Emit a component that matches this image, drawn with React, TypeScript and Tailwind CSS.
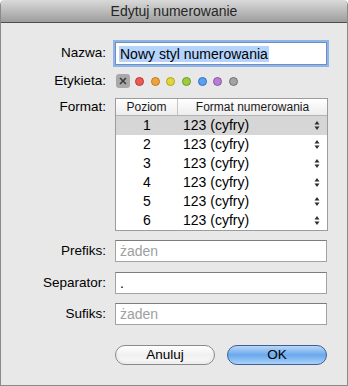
const dots = ["#ec5a52", "#f2a23c", "#e4d43c", "#9ccb3e", "#5c9ef0", "#b67ed4", "#a4a4a4"];
const strokes = ["#b53a33", "#bd7a22", "#b0a024", "#6f9a26", "#356fc0", "#8a57a6", "#707070"];
const levels = [1, 2, 3, 4, 5, 6];

const Stepper = () => (
  <svg width="6" height="11" viewBox="0 0 6 11" className="shrink-0">
    <path d="M3 1 L5.5 4.5 L0.5 4.5 Z" fill="#2e2e2e" />
    <path d="M3 10 L5.5 6.5 L0.5 6.5 Z" fill="#2e2e2e" />
  </svg>
);

const Field = ({ label, value, placeholder, mt }: { label: string; value?: string; placeholder?: string; mt: string }) => (
  <div className={`flex items-center ${mt}`}>
    <div className="w-[105px] text-right text-[13.5px] text-black">{label}</div>
    <div className="ml-[9px] w-[212px] h-[22px] bg-white border border-[#a3a3a3] border-t-[#7c7c7c] flex items-center pl-[4px] text-[14px]">
      {value ? <span className="text-black">{value}</span> : <span className="text-[#a0a0a0]">{placeholder}</span>}
    </div>
  </div>
);

const App = () => {
  return (
    <div className="w-[348px] h-[386px] bg-white" style={{ fontFamily: '"Liberation Sans", Arial, sans-serif' }}>
      <div className="h-full flex flex-col border border-[#8a8a8a] border-t-0 rounded-t-[5px] overflow-hidden">
        <div className="h-[23px] shrink-0 bg-gradient-to-b from-[#d9d9d9] via-[#bcbcbc] to-[#9d9d9d] border-b border-[#4e4e4e] flex items-center justify-center text-[14px] text-[#262626]">
          Edytuj numerowanie
        </div>
        <div className="flex-1 bg-[#e8e8e8] flex flex-col">
          {/* Nazwa */}
          <div className="flex items-center mt-[19px]">
            <div className="w-[105px] text-right text-[13.5px] text-black">Nazwa:</div>
            <div className="ml-[9px] w-[212px] h-[23px] bg-white border border-[#6f8fc0] shadow-[0_0_0_2px_#8db5ea] flex items-center pl-[3px] text-[14px]">
              <span className="bg-[#b5d4fd] text-black px-[1px] leading-[16px]">Nowy styl numerowania</span>
            </div>
          </div>

          {/* Etykieta */}
          <div className="flex items-center mt-[9px] h-[14px]">
            <div className="w-[105px] text-right text-[13.5px] text-black">Etykieta:</div>
            <div className="ml-[10px] flex items-center">
              <div className="w-[14px] h-[14px] rounded-[3px] bg-[#a9a9a9] flex items-center justify-center">
                <svg width="8" height="8" viewBox="0 0 8 8">
                  <path d="M1 1 L7 7 M7 1 L1 7" stroke="#3c3c3c" strokeWidth="1.6" />
                </svg>
              </div>
              <div className="flex items-center ml-[5px] gap-[6.7px]">
                {dots.map((c, i) => (
                  <div key={c} className="w-[9px] h-[9px] rounded-full border" style={{ backgroundColor: c, borderColor: strokes[i] }} />
                ))}
              </div>
            </div>
          </div>

          {/* Format */}
          <div className="flex items-start mt-[10px]">
            <div className="w-[105px] text-right text-[13.5px] text-black pt-[1px] leading-[16px]">Format:</div>
            <div className="ml-[9px] w-[213px] border border-[#9c9c9c] bg-white">
              <div className="h-[17px] flex border-b border-[#b3b3b3] bg-gradient-to-b from-white to-[#ededed] text-[12px] text-[#1a1a1a]">
                <div className="w-[62px] border-r border-[#c4c4c4] flex items-center justify-center">Poziom</div>
                <div className="flex-1 flex items-center justify-center">Format numerowania</div>
              </div>
              {levels.map((n) => (
                <div key={n} className={`h-[19px] flex items-center text-[14px] text-black ${n === 1 ? "bg-[#d6d6d6]" : ""}`}>
                  <div className="w-[62px] text-center">{n}</div>
                  <div className="flex-1 pl-[5px]">123 (cyfry)</div>
                  <div className="mr-[7px]">
                    <Stepper />
                  </div>
                </div>
              ))}
            </div>
          </div>

          <Field label="Prefiks:" placeholder="żaden" mt="mt-[9px]" />
          <Field label="Separator:" value="." mt="mt-[10px]" />
          <Field label="Sufiks:" placeholder="żaden" mt="mt-[9px]" />

          {/* Buttons */}
          <div className="flex mt-[20px] ml-[114px] gap-[12px]">
            <button className="w-[100px] h-[20px] rounded-full border border-[#8a8a8a] bg-gradient-to-b from-white via-[#f0f0f0] to-[#fafafa] text-[13.5px] text-black leading-none shadow-[inset_0_-2px_3px_rgba(0,0,0,0.06)]">
              Anuluj
            </button>
            <button className="w-[100px] h-[20px] rounded-full border border-[#3f5f94] bg-gradient-to-b from-[#b9d7f7] via-[#6aa8ec] to-[#a9d2fb] text-[13.5px] text-black leading-none">
              OK
            </button>
          </div>
        </div>
      </div>
    </div>
  );
};

export default App;
